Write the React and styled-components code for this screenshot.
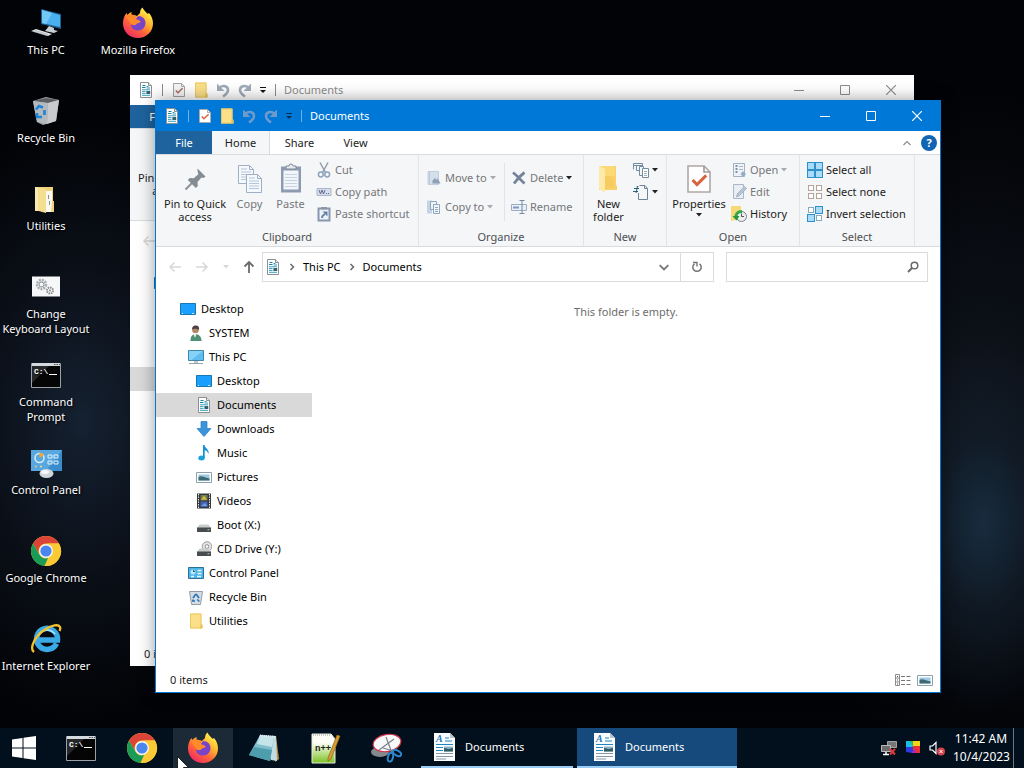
import React from 'react';
import styled, { createGlobalStyle, css, ThemeProvider } from 'styled-components';

const theme = {
  accent: '#0078d7',
  fileTab: '#1e639d',
  ribbon: '#f5f6f7',
  line: '#dadbdc',
  text: '#1c1c1c',
  muted: '#74777b',
  selected: '#d9d9d9',
};

const GlobalStyle = createGlobalStyle`
  * {
    box-sizing: border-box;
  }

  body {
    margin: 0;
    overflow: hidden;
    background-color: #020306;
    font-family: 'Noto Sans', 'Open Sans', sans-serif;
    font-size: 11px;
    line-height: 16px;
  }

  button,
  input {
    font: inherit;
    color: inherit;
    background: none;
    border: 0;
    padding: 0;
    margin: 0;
  }

  a {
    color: inherit;
    text-decoration: none;
  }

  ul {
    list-style: none;
    margin: 0;
    padding: 0;
  }

  svg {
    display: block;
    flex: none;
  }
`;

/* ---------- icons ---------- */

const Svg = ({ size = 16, width, height, box = 16, children }) => (
  <svg
    width={width || size}
    height={height || size}
    viewBox={`0 0 ${box} ${box}`}
    fill="none"
    aria-hidden="true"
  >
    {children}
  </svg>
);

const DocumentIcon = ({ size = 16 }) => (
  <Svg size={size}>
    <path d="M2.500.500h8l3 3v12h-11z" fill="#fff" stroke="#8a8f94" />
    <path d="M10.500.500v3h3" stroke="#8a8f94" fill="#e8e8e8" />
    <path d="M4.500 3.500h3M4 5.500h3.500" stroke="#1c7fa6" strokeWidth="1.200" />
    <path d="M8.500 4.500h2M8.500 6h3.500M4 7.800h8M4 9.600h3.500M4 11.400h3.500M4 13.300h8" stroke="#2391b5" strokeWidth=".9" />
    <path d="M8.400 9h3.800v3H8.400z" fill="#35606f" />
  </Svg>
);

const LargeDocumentIcon = () => (
  <Svg size={30} box={30}>
    <path d="M5 1h16l5 5v23H5z" fill="#fcfdfe" />
    <path d="M21 1v5h5" fill="#b7c5d1" />
    <text x="7" y="10" fill="#1b78b6" fontFamily="Liberation Serif, serif" fontSize="10" fontStyle="italic" fontWeight="700">
      A
    </text>
    <path d="M16 6h4M16 9h7M7 12.500h17M7 15.500h7M7 18.500h7" stroke="#1d86c0" />
    <path d="M7 21.500h17M7 24.500h17M7 27h10" stroke="#8999aa" />
    <path d="M15 14.500h9v5h-9z" fill="#8bb5cc" />
    <path d="m15 16 5 1 4-1v3.500h-9z" fill="#335b62" />
  </Svg>
);

const CheckSheetIcon = ({ size = 16, faded }) => (
  <Svg size={size}>
    <path d="M2.500 1.500h8l3 3v10h-11z" fill={faded ? '#f4f4f4' : '#fff'} stroke={faded ? '#928a88' : '#b0a7a4'} strokeWidth=".8" />
    <path d="M10.500 1.500v3h3" stroke="#a09a98" strokeWidth=".8" />
    <path d="m4.800 8.500 2.200 2.300 4.600-4.600" stroke={faded ? '#a66b62' : '#d9633f'} strokeWidth="1.500" />
  </Svg>
);

const FolderIcon = ({ size = 16 }) => (
  <Svg size={size}>
    <path d="M2 .5h11.500v11l1 1v3H2z" fill="#fbe089" />
    <path d="M2.500 1h10.500v14h-10.500z" stroke="#edc85f" />
    <path d="M12.500 11.500h2v4h-2z" fill="#e9c04f" />
  </Svg>
);

const UndoIcon = ({ color, flip }) => (
  <Svg>
    <g transform={flip ? 'translate(16 0) scale(-1 1)' : undefined}>
      <path d="M4.500 5.500c4-3 8.500-1 8.500 2.500 0 2.500-2 4.500-5 6.500" stroke={color} strokeWidth="2.600" />
      <path d="M2 1.500v7.500h7.500z" fill={color} />
    </g>
  </Svg>
);

const CustomizeIcon = ({ color }) => (
  <Svg size={8} box={8}>
    <path d="M1 1.500h6" stroke={color} />
    <path d="M1 4h6L4 7z" fill={color} />
  </Svg>
);

const Caret = ({ color = '#222' }) => (
  <Svg size={6} box={6}>
    <path d="M0 1h6L3 4.500z" fill={color} />
  </Svg>
);

const Chevron = ({ direction = 'right', size = 8, color = '#6a6a6a', weight = 1.5 }) => {
  const paths = {
    right: 'M2.500 1l3 3-3 3',
    down: 'M.5 2.500l3.500 3.500 3.500-3.500',
    up: 'M.5 6l3.500-3.500L7.500 6',
  };
  return (
    <Svg size={size} box={8}>
      <path d={paths[direction]} stroke={color} strokeWidth={weight} />
    </Svg>
  );
};

const Arrow = ({ rotate = 0, color, weight = 1.5 }) => (
  <Svg size={14} box={14}>
    <g transform={`rotate(${rotate} 7 7)`}>
      <path d="M13 7H2M6.500 2.500 2 7l4.500 4.500" stroke={color} strokeWidth={weight} />
    </g>
  </Svg>
);

const PinIcon = () => (
  <Svg size={32} box={32}>
    <path d="M6.500 26.500 15 18" stroke="#8b9299" strokeWidth="2" />
    <path d="m18.500 5.500 8 8-2 1.500-2-.5-4 4.500.3 4-2 2-8-8 2-2 4 .3 4.500-4-.8-3.500z" fill="#848c94" />
  </Svg>
);

const CopyIcon = () => (
  <Svg size={32} box={32}>
    {[[4, 2], [12, 11]].map(([x, y]) => (
      <g key={x} transform={`translate(${x} ${y})`}>
        <path d="M.5.500h11l4 4v14H.5z" fill="#f5f8fc" stroke="#9fb0c4" />
        <path d="M11.500.500v4h4" stroke="#9fb0c4" />
        <path d="M3 4h6M3 7h10M3 9.500h10M3 12h10M3 14.500h10" stroke="#b4c6d9" />
      </g>
    ))}
  </Svg>
);

const PasteIcon = () => (
  <Svg size={32} box={32}>
    <path d="M6 3.500h20v26H6z" fill="#8d9bb0" />
    <path d="M8.500 7.500h15v19h-15z" fill="#f2f6fb" />
    <path d="M11 6V3h3a2 2 0 0 1 4 0h3v3z" fill="#e7ebf0" stroke="#7e8898" />
    <path d="M10 11.500h12M10 14.500h12M10 17.500h12M10 20.500h12M10 23.500h12" stroke="#c7d3e0" />
  </Svg>
);

const CutIcon = () => (
  <Svg>
    <path d="m4 .5 5.500 10M12 .5 6.500 10.500" stroke="#8e99a7" strokeWidth="1.400" />
    <circle cx="4.800" cy="12.500" r="2.400" stroke="#8fa2bb" strokeWidth="1.500" />
    <circle cx="11.200" cy="12.500" r="2.400" stroke="#8fa2bb" strokeWidth="1.500" />
  </Svg>
);

const CopyPathIcon = () => (
  <Svg>
    <path d="M1 4.500h14v7H1z" fill="#d7ddec" stroke="#aab6cd" />
    <path d="m3 6 1.500 4L6 6l1.500 4L9 6M10 9.500h1M12 9.500h1" stroke="#5e6c91" />
  </Svg>
);

const PasteShortcutIcon = () => (
  <Svg>
    <path d="M2.500 2.500h11v12h-11z" stroke="#8797ae" strokeWidth="2" fill="#eef2f8" />
    <path d="M5 3.500V1h6v2.500z" fill="#8c97a8" />
    <path d="M6 12c0-2 1-3 3-4" stroke="#6280a7" strokeWidth="1.800" />
    <path d="M6.500 5.500h5V10.500z" fill="#6280a7" />
  </Svg>
);

const MoveToIcon = () => (
  <Svg>
    <path d="M2 1.500h10.500v13H2z" fill="#d3dfeb" stroke="#c0cedd" />
    <path d="M3.500 2v12" stroke="#b6c7da" />
    <path d="m6.500 10.500 3-3v2h2V8l3 5.500h-8z" fill="#8f9fb5" />
  </Svg>
);

const CopyToIcon = () => (
  <Svg>
    <path d="M1 1.500h5v13H1z" fill="#c4d4e4" />
    <path d="M4.500 2.500h6v8h-6z" fill="#edf2f7" stroke="#91a6bf" />
    <path d="M7.500 5.500h6v9h-6z" fill="#f3f6f9" stroke="#91a6bf" />
    <path d="M9 8.500h3M9 10.500h3M9 12.500h3" stroke="#91a6bf" />
  </Svg>
);

const DeleteIcon = () => (
  <Svg>
    <path d="M2 2.500c4 3 7 7 11.500 11M13.500 2.500C10 5 7 8 3 13.500" stroke="#75839a" strokeWidth="2.800" />
  </Svg>
);

const RenameIcon = () => (
  <Svg>
    <path d="M.5 5.500h15v6H.5z" fill="#eaf0f7" stroke="#9caec4" />
    <path d="M2 7.500h6v2H2z" fill="#7f9bc2" />
    <path d="M8.500 1.500h5M11 1.500v13M8.500 14.500h5" stroke="#7789a1" />
  </Svg>
);

const NewFolderIcon = () => (
  <Svg size={32} box={32}>
    <path d="M6 3h17v19l1 1v4H6z" fill="#f9d06a" />
    <path d="M6 3h16v10H6z" fill="#fbd974" />
    <path d="m6 3 6 3v24l-6-4z" fill="#fdeaa8" />
    <path d="M12 13h5l4 4v7l-9 2z" fill="#f7cb5f" />
  </Svg>
);

const NewItemIcon = () => (
  <Svg>
    <path d="M.5 7.500v-6h9v3M.5 3.500h9M3.500 3.500v5h3" stroke="#748ca0" />
    <path d="M6.500 4.500h4v9h-4z" fill="#f2f6f8" stroke="#748ca0" />
    <path d="M9.500 6.500h6v9h-6z" fill="#fff" stroke="#748ca0" />
    <path d="M11 9.500h3M11 11.500h3M11 13.500h3" stroke="#9bb1c1" />
  </Svg>
);

const EasyAccessIcon = () => (
  <Svg>
    <path d="M5.500 2.500h-2M5.500 9v6.500h9v-11l-2.500-3H6.500" stroke="#6f8597" />
    <path d="M11.500 1.500v3h3" stroke="#6f8597" />
    <path d="M1 4.500h5M0 7.500h5M4.500 2.500 3 9" stroke="#24627d" />
  </Svg>
);

const OpenIcon = () => (
  <Svg>
    <path d="M2.500 1.500h11v13h-11z" fill="#eff3f7" stroke="#a3b1c0" />
    <path d="M4.500 4h2M4.500 7h2M4.500 10h2" stroke="#7f93ab" strokeWidth="2" />
    <path d="M8 4.500h4M8 7.500h4" stroke="#a8b8ca" />
    <path d="m12 9 3 3-3 3-2.500-3z" fill="#98acc4" />
  </Svg>
);

const EditIcon = () => (
  <Svg>
    <path d="M2.500.500h10v14h-10z" fill="#e9eef5" stroke="#a9b7c9" />
    <path d="m5.500 13 1-3.500 7-7 2 2-7 7z" fill="#b9c5d4" stroke="#9baabd" strokeWidth=".8" />
  </Svg>
);

const HistoryIcon = () => (
  <Svg>
    <path d="M0 0h10v13l-10 2z" fill="#f7d978" />
    <circle cx="10.500" cy="10.500" r="5" fill="#eef0ef" stroke="#7b8085" />
    <path d="M10.500 7.500v3H13" stroke="#555" />
    <path d="M5 12c-.5-4 1.500-6.500 6-6.500" stroke="#35a947" strokeWidth="3" />
    <path d="M1.500 10h7L5.500 14.500z" fill="#1f9a3d" />
  </Svg>
);

const tiles = {
  all: [1, 1, 1, 1],
  none: [0, 0, 0, 0],
  invert: [0, 1, 1, 0],
};

const SelectIcon = ({ kind }) => (
  <Svg>
    {tiles[kind].map((on, i) => {
      const x = (i % 2) * 8;
      const y = Math.floor(i / 2) * 8;
      return on ? (
        <rect key={i} x={x + 0.5} y={y + 0.5} width="7" height="7" fill="#a9dcfb" stroke="#2f8fcb" />
      ) : (
        <rect key={i} x={x + 1.5} y={y + 1.5} width="5" height="5" fill="#fff" stroke={kind === 'none' ? '#b5a39b' : '#8aa9bf'} />
      );
    })}
  </Svg>
);

const RefreshIcon = () => (
  <Svg size={12} box={12}>
    <path d="M3.500 2.800A4.200 4.200 0 1 0 8.500 2.800" stroke="#757575" strokeWidth="1.500" />
    <path d="M2 1.500h4v4" stroke="#757575" strokeWidth="1.400" />
  </Svg>
);

const SearchIcon = () => (
  <Svg size={12} box={12}>
    <circle cx="7.500" cy="4.500" r="3.300" stroke="#6b6b6b" strokeWidth="1.500" />
    <path d="M5.200 6.800 1 11" stroke="#6b6b6b" strokeWidth="2" />
  </Svg>
);

const DesktopIcon = () => (
  <Svg>
    <path d="M.5 2.500h15v11H.5z" fill="#1a9fff" stroke="#1576b8" />
    <path d="M2 12.500h1M12 12.500h2" stroke="#d5efff" />
  </Svg>
);

const UserIcon = () => (
  <Svg>
    <path d="M2.500 16c0-4 1-6.500 5-7 4 .5 6 3 6 7z" fill="#4f8f73" />
    <path d="m5.500 9 1.500 4 1.500-4z" fill="#eef2ef" />
    <circle cx="7.500" cy="5" r="3.300" fill="#b48468" />
    <path d="M4 4.500C4 1.500 6 0 8 .5c2.500 0 3.500 2 3 4.500C9.500 3.500 6 3.500 4 4.500z" fill="#4c4340" />
  </Svg>
);

const MonitorIcon = () => (
  <Svg>
    <path d="M.5 1.500h15v10H.5z" fill="#5ebcf0" stroke="#3f86a8" />
    <path d="M1 2h14L3 11H1z" fill="#86d2f7" />
    <path d="M6 12h4v2H6z" fill="#c0c8cc" />
    <path d="M1 14.500h14" stroke="#9aa4aa" />
  </Svg>
);

const DownloadIcon = () => (
  <Svg>
    <path d="M5 .5h6v7h4l-7 8-7-8h4z" fill="#3a93dd" stroke="#2a78bd" strokeWidth=".7" />
  </Svg>
);

const MusicIcon = () => (
  <Svg>
    <ellipse cx="5.500" cy="13" rx="3.200" ry="2.500" fill="#1aa0dd" />
    <path d="M7 13V0h1.500c.5 3.500 5 4 4 9-1-3-2.500-3.500-3.800-3.700V13z" fill="#1590d0" />
  </Svg>
);

const PictureIcon = () => (
  <Svg>
    <path d="M.5 3.500h15v10H.5z" fill="#fff" stroke="#8da0ad" />
    <path d="M2.500 5.500h11v6h-11z" fill="#9fc9e2" />
    <path d="M2.500 8c3-2 5 .5 11 1.500v2h-11z" fill="#3d6a75" />
  </Svg>
);

const VideoIcon = () => (
  <Svg>
    <path d="M1 .5h14v15H1z" fill="#34383d" />
    <path d="M2.500 1v14M13.500 1v14" stroke="#e4e4e4" strokeDasharray="1.500 1" />
    <path d="M4.500 2h7v5.500h-7z" fill="#6c8149" />
    <path d="m5 7 3-4.500 3 4z" fill="#d5b63f" />
    <path d="M4.500 8.500h7V14h-7z" fill="#4660b4" />
    <path d="m5 13 4-3 2.500 3z" fill="#6f9dd6" />
  </Svg>
);

const DriveIcon = ({ disc }) => (
  <Svg>
    {disc && (
      <g>
        <circle cx="11" cy="5.500" r="4.800" fill="#e2e2e2" stroke="#9f9f9f" />
        <circle cx="11" cy="5.500" r="1.800" fill="#fff" stroke="#8d8d8d" />
      </g>
    )}
    <path d="M3.500 7.500h9L15 11H1z" fill="#c9cccd" />
    <path d="M1 10.500h14v4.500H1z" fill="#474c4f" />
    <path d="M11.500 12.800h2" stroke="#a7d5a2" />
  </Svg>
);

const ControlPanelIcon = ({ large }) =>
  large ? (
    <Svg size={32} box={32}>
      <path d="M1 3h31v21H1z" fill="#3a8dcc" />
      <path d="M1 3h31L16 24H1z" fill="#58a8df" />
      <circle cx="9.500" cy="11" r="4.500" stroke="#d9effc" strokeWidth="1.500" />
      <path d="M9.500 11V5.500a5.500 5.500 0 0 1 4.500 2.500z" fill="#f2a338" />
      <path d="M18 8h4v3h-4zM24 8h4v3h-4zM18 14h4v3h-4zM24 14h4v3h-4z" stroke="#dff2fd" />
      <path d="M5 19.500h1.500M10 19.500h2" stroke="#f7d58a" strokeWidth="1.500" />
      <ellipse cx="16.500" cy="26.500" rx="7" ry="4.500" fill="#cfd6da" />
      <ellipse cx="15" cy="25" rx="4" ry="2" fill="#f4f6f7" />
    </Svg>
  ) : (
    <Svg>
      <path d="M.5 2.500h15v11H.5z" fill="#4db5ea" stroke="#2c6f98" />
      <circle cx="5" cy="7" r="2.500" fill="#bfe7fb" />
      <path d="M5 7V4.500L7.500 7z" fill="#276b3f" />
      <path d="M9.500 5.500h4M9.500 8.500h4M3 11.500h3M9 11.500h4" stroke="#e7f7ff" strokeWidth="1.500" />
    </Svg>
  );

const BinIcon = ({ large }) =>
  large ? (
    <Svg size={32} box={32}>
      <path d="m3 6 13-4 13 3-3 21-13 4-6-3z" fill="#a5a9ac" />
      <path d="m3 6 13-3 13 2-11 3z" fill="#5c6063" />
      <path d="m18 8 11-3-3 21-9 3z" fill="#c8cacc" />
      <path d="m3 6 15 2-1 21-10-2z" fill="#b4b9bd" />
      <path d="M6 14.500 9 11l4 1.500M14.500 15v5M12 22H7v-4" stroke="#1b83d8" strokeWidth="2.600" />
    </Svg>
  ) : (
    <Svg>
      <path d="M1.500 2.500h13l-2 13h-9z" fill="#d6dce3" stroke="#949da6" />
      <path d="m5 9 2.500-3.500h1L11 9M10.500 11H9M7 12H4.800L5 10.500M11.500 12H10" stroke="#2675bb" strokeWidth="1.600" />
    </Svg>
  );

const ThisPcIcon = () => (
  <Svg size={32} box={32}>
    <path d="m11 2 20 5v15l-20-5z" fill="#1c5f93" />
    <path d="m12 3 18 5v12l-18-4z" fill="#4bb1ee" />
    <path d="m12 3 10 3-6 11-4-1z" fill="#74c8f6" />
    <path d="m19 19 5 2v2l4 1-4 2-9-2z" fill="#c8cfd4" />
    <path d="m1 24 5-2 16 5-4 2z" fill="#dfe3e6" />
    <path d="m5 23.500 13 4M3.500 24.500l13 4" stroke="#9ea6ab" strokeWidth=".6" />
  </Svg>
);

const UtilitiesIcon = () => (
  <Svg size={32} box={32}>
    <path d="M5 4h18v24H5z" fill="#edd27b" />
    <path d="M14 8h8v21h-8z" fill="#f8f8f3" />
    <path d="M18.500 12v4M19.500 18v4" stroke="#8d8d80" />
    <path d="m5 4 11 2v24L5 27z" fill="#f5de90" />
    <path d="m5 4 3 1v23l-3-1z" fill="#f9eab3" />
    <path d="M22 18h2v11h-3z" fill="#f0d27a" />
  </Svg>
);

const GearsIcon = () => (
  <Svg size={32} box={32}>
    <path d="M2 5.500h28v20H2z" fill="#f5f7f8" />
    <circle cx="11.500" cy="13.500" r="4.500" stroke="#a9acae" strokeWidth="2.500" strokeDasharray="2 1" />
    <circle cx="11.500" cy="13.500" r="2.500" stroke="#85898b" />
    <circle cx="20" cy="19.500" r="3" stroke="#8a8e90" strokeWidth="2" strokeDasharray="1.500 .8" />
    <circle cx="20" cy="19.500" r="1" fill="#85898b" />
  </Svg>
);

const PromptIcon = () => (
  <Svg size={32} box={32}>
    <path d="M1.500 4.500h29v24h-29z" fill="#050505" stroke="#9aa0a5" />
    <path d="M2 4h28v3H2z" fill="#d5dade" />
    <path d="M24 5.500h1.500M26.500 5.500h1.500M29 5.500h1" stroke="#555" />
    <path d="M2 7h17L2 24z" fill="#26282a" />
    <text x="4" y="15" fill="#fff" fontFamily="Liberation Mono, monospace" fontSize="8" fontWeight="700">
      C:\
    </text>
    <path d="M19 15.500h8" stroke="#fff" />
  </Svg>
);

const ChromeIcon = () => (
  <Svg size={32} box={32}>
    <circle cx="16" cy="16" r="15" fill="#fbc934" />
    <path d="M3 8.500A15 15 0 0 1 29 8.500H16a7.500 7.500 0 0 0-6.500 11.200z" fill="#db4437" />
    <path d="M3 8.500 9.500 19.700A7.500 7.500 0 0 0 18 23l-3.500 8A15 15 0 0 1 3 8.500z" fill="#1a9c56" />
    <path d="M16 8.500h13A15 15 0 0 1 14.500 31l8-11.200A7.500 7.500 0 0 0 16 8.500z" fill="#fbc934" />
    <circle cx="16" cy="16" r="7" fill="#f4f6f8" />
    <circle cx="16" cy="16" r="5.600" fill="#4a86ee" />
  </Svg>
);

const FirefoxIcon = ({ id }) => (
  <Svg size={32} box={32}>
    <defs>
      <linearGradient id={id} x1="26" y1="4" x2="8" y2="29" gradientUnits="userSpaceOnUse">
        <stop offset="0" stopColor="#fff04a" />
        <stop offset=".35" stopColor="#ffb02e" />
        <stop offset=".65" stopColor="#ff6438" />
        <stop offset="1" stopColor="#f22f62" />
      </linearGradient>
    </defs>
    <path
      d="M20.500.500c1 2.500 3 4 5 6.200 1 .2 1.500-.7 1.500-.7 2.500 3 4 6.500 4 10.300C31 25 24.300 31 16 31S1 25 1 16.500c0-4 1-7.500 3.500-10.500L5.500 8c1-1.500 2.500-2.500 4-3L9.500 8c2 0 4 .2 5.500 1l3-3c0-2.500 1-4.500 2.500-5.500z"
      fill={`url(#${id})`}
    />
    <path d="M16.500 9c4 0 7 3 7 7s-3 7.500-7.500 7.500S9 21 9 17c2 1.500 4.500 1 6-.5 1.500-1 3-.8 3.500-1.500-.5-1.500-3-1.500-4.500-3 .5-1.500 1.500-2.500 2.500-3z" fill="#7a44c9" />
    <path d="M4.500 9.500c4-3.500 9-1.500 10.500.5-1 0-1.500 2-1 2.500 1.500.5 3.500.5 4 1.500 0 1-2.500 1.500-3.500 3s-4 1.500-5.500 0c-.5-2-2.500-3-4.500-7.500z" fill="#ff8a2b" />
  </Svg>
);

const ExplorerIcon = () => (
  <Svg size={32} box={32}>
    <path d="M26.500 20.500A10.500 10.500 0 1 1 27.500 17H8" stroke="#3aa9e6" strokeWidth="5.500" />
    <path d="M8 13a10 10 0 0 1 17-2" stroke="#9fe2fb" strokeWidth="1.800" />
    <path d="M4 29C-1 25 5 13 15 6.500 22 2 28.500 1 30 4c.5 1.200.3 2.500-.5 4" stroke="#f3c12f" strokeWidth="2.300" />
  </Svg>
);

const NotepadIcon = () => (
  <Svg size={32} box={32}>
    <path d="m28 4 3 23-4 3z" fill="#b78f4c" />
    <path d="m12 3 16 1 1 25-6-1z" fill="#c2dde2" />
    <path d="m12 3 14 2-4 24L1 23z" fill="#7fbfcc" />
    <path d="m12 3 14 2-2 10-15-3z" fill="#c4e4ea" />
    <path d="m6 15 18 3-2 11L1 23z" fill="#4e9dac" />
    <path d="m12 3.500 16 1.500" stroke="#e9eef0" strokeWidth="2" strokeDasharray="1 1" />
  </Svg>
);

const NotepadPlusIcon = ({ id }) => (
  <Svg size={32} box={32}>
    <defs>
      <linearGradient id={id} x1="0" y1="0" x2="0" y2="1">
        <stop offset=".3" stopColor="#fdfef6" />
        <stop offset="1" stopColor="#7cc224" />
      </linearGradient>
    </defs>
    <path d="M3 2h19l4 5v24H3z" fill={`url(#${id})`} stroke="#e9ecdf" />
    <path d="M4 3h17" stroke="#999" strokeDasharray="1 1" />
    <text x="6" y="19" fill="#1c2418" fontFamily="Liberation Sans, sans-serif" fontSize="9" fontWeight="700">
      n++
    </text>
    <path d="m19 26 9-23 3 1-9 23-3 2z" fill="#d99c2d" stroke="#8a6526" strokeWidth=".7" />
  </Svg>
);

const SnippingIcon = () => (
  <Svg size={32} box={32}>
    <ellipse cx="10" cy="20" rx="9" ry="5" fill="#85898e" />
    <ellipse cx="17" cy="11" rx="14" ry="8.500" transform="rotate(-10 17 11)" fill="#f8f8f8" stroke="#d3344d" strokeWidth="1.200" />
    <path d="m16 5 6 16M24 7 9 18M13 16l10 3" stroke="#79828a" strokeWidth="1.200" />
    <ellipse cx="20.500" cy="25" rx="2.500" ry="4.500" transform="rotate(15 20 25)" stroke="#2b86cc" strokeWidth="2" />
    <ellipse cx="27" cy="21" rx="2.500" ry="4.500" transform="rotate(-60 27 21)" stroke="#2b86cc" strokeWidth="2" />
  </Svg>
);

const WindowsIcon = () => (
  <Svg size={24} box={24}>
    <path d="M0 3.500 10.500 2v9.500H0zM11.500 1.800 24 0v11.500H11.500zM0 12.500h10.500V22L0 20.500zM11.500 12.500H24V24l-12.500-1.800z" fill="#fff" />
  </Svg>
);

const NetworkIcon = () => (
  <Svg>
    <path d="M6.500 1.500h9v6h-9z" fill="#777" stroke="#a2a2a2" />
    <path d="M.5 5.500h9v6h-9z" fill="#6c6c6c" stroke="#bababa" />
    <path d="M5 12v2M2 14.500h6" stroke="#fff" strokeWidth="1.500" />
    <path d="m9 9 5 5.500M14 9l-5 5.500" stroke="#e23a3a" strokeWidth="2" />
  </Svg>
);

const DisplayIcon = () => (
  <Svg>
    <path d="M1 1h7v7H1z" fill="#27c04d" />
    <path d="M8 1h7v5H8z" fill="#f4d21c" />
    <path d="M1 1h4l3 5-4 3-3-2z" fill="#18bfe0" />
    <path d="M8 6h7v7H8z" fill="#ea2d36" />
    <path d="M1 7h7v6l-7-1z" fill="#3039e0" />
    <path d="m6 13 4-4 1 4H6z" fill="#a826c4" />
  </Svg>
);

const VolumeIcon = () => (
  <Svg>
    <path d="M1 6h2.500L7 2.500v11L3.500 10H1z" stroke="#fff" strokeWidth="1.200" />
    <circle cx="12" cy="11.500" r="4" fill="#d64550" />
    <path d="m10.500 10 3 3M13.500 10l-3 3" stroke="#fff" />
  </Svg>
);

const DetailsViewIcon = () => (
  <Svg>
    <path d="M.5 2.500h4v11h-4zM.5 6h4M.5 10h4" stroke="#8b8b8b" />
    <path d="M2 4.500h1M2 8h1M2 12h1" stroke="#555" />
    <path d="M6 4.500h4M11.500 4.500h4M6 8.500h4M11.500 8.500h4M6 12.500h4M11.500 12.500h4" stroke="#777" />
  </Svg>
);

/* ---------- desktop ---------- */

const Screen = styled.div`
  display: flex;
  flex-direction: column;
  height: 100vh;
  background: radial-gradient(ellipse 110px 190px at 96% 68%, #182c3e 0%, rgba(17, 28, 40, 0.8) 45%, transparent 100%),
    radial-gradient(ellipse 190px 300px at 8% 55%, #152131 0%, rgba(13, 19, 29, 0.8) 50%, transparent 100%),
    radial-gradient(ellipse 260px 330px at 96% 55%, #10151e 0%, transparent 100%), #020306;
`;

const Desktop = styled.main`
  position: relative;
  flex: 1;
  min-height: 0;
`;

const ShortcutGrid = styled.ul`
  display: grid;
  grid-auto-flow: column;
  grid-template-rows: repeat(8, 88px);
  grid-auto-columns: 92px;
  justify-content: start;
`;

const Shortcut = styled.a`
  display: flex;
  flex-direction: column;
  align-items: center;
  gap: 3px;
  padding-top: 7px;
  color: #fff;
  line-height: 15px;
  text-align: center;
  white-space: pre-line;
  text-shadow: 1px 1px 2px #000;
`;

/* ---------- window ---------- */

const WindowFrame = styled.section`
  position: absolute;
  top: ${({ $inset }) => $inset[0]}px;
  right: ${({ $inset }) => $inset[1]}px;
  bottom: ${({ $inset }) => $inset[2]}px;
  left: ${({ $inset }) => $inset[3]}px;
  display: flex;
  flex-direction: column;
  overflow: hidden;
  color: ${({ theme }) => theme.text};
  background-color: #fff;

  ${({ $active, theme }) =>
    $active &&
    css`
      border: 1px solid ${theme.accent};
      box-shadow: 0 0 16px rgba(0, 0, 0, 0.4);
    `}
`;

const TitleBar = styled.header`
  display: flex;
  align-items: center;
  flex: none;
  height: 30px;
  padding-left: 8px;
  color: ${({ $active }) => ($active ? '#fff' : '#8c8c8c')};
  background-color: ${({ $active, theme }) => ($active ? theme.accent : '#fff')};
`;

const QuickAccess = styled.div`
  display: flex;
  align-items: center;
  gap: 6px;
`;

const TitleDivider = styled.span`
  width: 1px;
  height: 12px;
  margin: 0 8px;
  background-color: ${({ $active }) => ($active ? '#6eb2ea' : '#8c8c8c')};
`;

const Title = styled.h1`
  flex: 1;
  margin: 0;
  font-size: 11px;
  font-weight: 400;
`;

const CaptionButton = styled.button`
  display: grid;
  place-items: center;
  width: 46px;
  height: 30px;
`;

const TabBar = styled.nav`
  display: flex;
  align-items: center;
  flex: none;
  height: 23px;
  padding-right: 3px;
`;

const Tab = styled.button`
  width: ${({ $width }) => $width}px;
  height: 24px;
  color: ${({ $file }) => ($file ? '#fff' : 'inherit')};
  background-color: ${({ $file, $current, theme }) => {
    if ($file) return theme.fileTab;
    return $current ? theme.ribbon : 'transparent';
  }};
  border-right: ${({ $current, theme }) => ($current ? `1px solid ${theme.line}` : 0)};
`;

const TabTools = styled.div`
  display: flex;
  align-items: center;
  gap: 10px;
  margin-left: auto;
`;

const HelpButton = styled.button`
  width: 16px;
  height: 16px;
  border-radius: 8px;
  color: #fff;
  background-color: #1166b4;
  font-weight: 700;
`;

const Ribbon = styled.div`
  display: flex;
  flex: none;
  height: 93px;
  background-color: ${({ theme }) => theme.ribbon};
  border: solid ${({ theme }) => theme.line};
  border-width: 1px 0;
`;

const Group = styled.section`
  display: flex;
  flex-direction: column;
  width: ${({ $width }) => $width}px;
  border-right: 1px solid #e4e5e6;
`;

const GroupBody = styled.div`
  display: flex;
  align-items: flex-start;
  flex: 1;
  padding-left: ${({ $indent }) => $indent || 0}px;
`;

const GroupLabel = styled.h2`
  margin: 0;
  height: 17px;
  font-size: 11px;
  font-weight: 400;
  text-align: center;
  color: #4c4f52;
`;

const BigButton = styled.button`
  display: flex;
  flex-direction: column;
  align-items: center;
  gap: 2px;
  width: ${({ $width }) => $width}px;
  padding-top: 8px;
  line-height: 13px;
  white-space: pre-line;
  color: ${({ $muted, theme }) => ($muted ? theme.muted : theme.text)};
`;

const Stack = styled.div`
  display: flex;
  flex-direction: column;
  padding-top: ${({ $loose }) => ($loose ? 8 : 4)}px;
  width: ${({ $width }) => ($width ? `${$width}px` : 'auto')};
`;

const SmallButton = styled.button`
  display: flex;
  align-items: center;
  gap: 3px;
  height: ${({ $loose }) => ($loose ? 29 : 22)}px;
  white-space: nowrap;
  color: ${({ $muted, theme }) => ($muted ? theme.muted : theme.text)};
`;

const StackDivider = styled.span`
  width: 1px;
  height: 58px;
  margin: 8px 6px 0 0;
  background-color: #e1e3e5;
`;

const AddressRow = styled.div`
  display: flex;
  align-items: center;
  flex: none;
  height: 40px;
  padding: 0 12px;
`;

const Navigation = styled.div`
  display: flex;
  align-items: center;
  justify-content: space-between;
  width: 88px;
  margin-right: 6px;
`;

const AddressBox = styled.div`
  display: flex;
  align-items: center;
  flex: 1;
  height: 30px;
  padding-left: 2px;
  border: 1px solid ${({ theme }) => theme.line};
`;

const Crumbs = styled.div`
  display: flex;
  align-items: center;
  gap: 7px;
  flex: 1;
  color: #000;
`;

const AddressButton = styled.button`
  display: grid;
  place-items: center;
  width: ${({ $divided }) => ($divided ? 33 : 32)}px;
  height: 28px;
  border-left: ${({ $divided, theme }) => ($divided ? `1px solid ${theme.line}` : 0)};
`;

const SearchBox = styled.label`
  display: flex;
  align-items: center;
  width: 202px;
  height: 30px;
  margin-left: 12px;
  padding: 0 8px;
  border: 1px solid ${({ theme }) => theme.line};
`;

const SearchInput = styled.input`
  flex: 1;
  min-width: 0;
  outline: 0;
`;

const Body = styled.div`
  display: flex;
  flex: 1;
  min-height: 0;
`;

const Tree = styled.ul`
  width: 156px;
  padding-top: 10px;
  color: #000;
`;

const TreeItem = styled.a`
  display: flex;
  align-items: center;
  gap: 5px;
  height: 24px;
  padding-left: ${({ $level }) => 24 + $level * 8}px;
  background-color: ${({ $selected, theme }) => ($selected ? theme.selected : 'transparent')};
`;

const Content = styled.div`
  flex: 1;
  padding-top: 17px;
  text-align: center;
  color: #6d6d6d;
`;

const StatusBar = styled.footer`
  display: flex;
  align-items: center;
  justify-content: space-between;
  flex: none;
  height: 24px;
  padding: 0 7px 0 14px;
`;

const ViewSwitch = styled.div`
  display: flex;
  gap: 6px;
`;

/* ---------- taskbar ---------- */

const TaskBar = styled.footer`
  display: flex;
  flex: none;
  height: 40px;
  color: #fff;
  background-color: #020f1c;
`;

const StartButton = styled.button`
  display: grid;
  place-items: center;
  width: 48px;
`;

const Pinned = styled.div`
  display: flex;
  gap: 1px;
  margin: 0 5px 0 3px;
`;

const PinnedButton = styled.button`
  position: relative;
  display: grid;
  place-items: center;
  width: 60px;
  background-color: ${({ $hover }) => ($hover ? '#1c2936' : 'transparent')};
`;

const Cursor = styled.svg`
  position: absolute;
  top: 28px;
  left: 4px;
`;

const TaskButton = styled.button`
  display: flex;
  align-items: center;
  gap: 6px;
  width: ${({ $active }) => ($active ? 160 : 152)}px;
  margin-right: 4px;
  padding: 0 0 0 ${({ $active }) => ($active ? 12 : 8)}px;
  border-bottom: 2px solid #99ccf5;
  background-color: ${({ $active }) => ($active ? '#174a7c' : 'transparent')};
`;

const Tray = styled.div`
  display: flex;
  align-items: center;
  gap: 8px;
  margin-left: auto;
`;

const Clock = styled.time`
  width: 56px;
  font-size: 12px;
  line-height: 18px;
  text-align: center;
`;

const ShowDesktop = styled.button`
  align-self: stretch;
  width: 11px;
  margin-left: -4px;
  border-left: 1px solid #6d7780;
`;

const shortcuts = [
  { label: 'This PC', icon: <ThisPcIcon /> },
  { label: 'Recycle Bin', icon: <BinIcon large /> },
  { label: 'Utilities', icon: <UtilitiesIcon /> },
  { label: 'Change\nKeyboard Layout', icon: <GearsIcon /> },
  { label: 'Command\nPrompt', icon: <PromptIcon /> },
  { label: 'Control Panel', icon: <ControlPanelIcon large /> },
  { label: 'Google Chrome', icon: <ChromeIcon /> },
  { label: 'Internet Explorer', icon: <ExplorerIcon /> },
  { label: 'Mozilla Firefox', icon: <FirefoxIcon id="fox-desktop" /> },
];

const tree = [
  { label: 'Desktop', level: 0, icon: <DesktopIcon /> },
  { label: 'SYSTEM', level: 1, icon: <UserIcon /> },
  { label: 'This PC', level: 1, icon: <MonitorIcon /> },
  { label: 'Desktop', level: 2, icon: <DesktopIcon /> },
  { label: 'Documents', level: 2, icon: <DocumentIcon />, selected: true },
  { label: 'Downloads', level: 2, icon: <DownloadIcon /> },
  { label: 'Music', level: 2, icon: <MusicIcon /> },
  { label: 'Pictures', level: 2, icon: <PictureIcon /> },
  { label: 'Videos', level: 2, icon: <VideoIcon /> },
  { label: 'Boot (X:)', level: 2, icon: <DriveIcon /> },
  { label: 'CD Drive (Y:)', level: 2, icon: <DriveIcon disc /> },
  { label: 'Control Panel', level: 1, icon: <ControlPanelIcon /> },
  { label: 'Recycle Bin', level: 1, icon: <BinIcon /> },
  { label: 'Utilities', level: 1, icon: <FolderIcon /> },
];

const pinned = [
  { label: 'Command Prompt', icon: <PromptIcon /> },
  { label: 'Google Chrome', icon: <ChromeIcon /> },
  { label: 'Mozilla Firefox', icon: <FirefoxIcon id="fox-taskbar" />, hover: true },
  { label: 'Notepad', icon: <NotepadIcon /> },
  { label: 'Notepad++', icon: <NotepadPlusIcon id="npp-taskbar" /> },
  { label: 'Snipping Tool', icon: <SnippingIcon /> },
];

const PinButton = () => (
  <BigButton $width={78}>
    <PinIcon />
    {'Pin to Quick\naccess'}
  </BigButton>
);

const RibbonPanel = () => (
  <Ribbon>
    <Group $width={263}>
      <GroupBody>
        <PinButton />
        <BigButton $width={31} $muted>
          <CopyIcon />
          Copy
        </BigButton>
        <BigButton $width={51} $muted>
          <PasteIcon />
          Paste
        </BigButton>
        <Stack>
          <SmallButton $muted>
            <CutIcon />
            Cut
          </SmallButton>
          <SmallButton $muted>
            <CopyPathIcon />
            Copy path
          </SmallButton>
          <SmallButton $muted>
            <PasteShortcutIcon />
            Paste shortcut
          </SmallButton>
        </Stack>
      </GroupBody>
      <GroupLabel>Clipboard</GroupLabel>
    </Group>
    <Group $width={165}>
      <GroupBody $indent={7}>
        <Stack $loose $width={78}>
          <SmallButton $loose $muted>
            <MoveToIcon />
            Move to
            <Caret color="#a7abb0" />
          </SmallButton>
          <SmallButton $loose $muted>
            <CopyToIcon />
            Copy to
            <Caret color="#a7abb0" />
          </SmallButton>
        </Stack>
        <StackDivider />
        <Stack $loose>
          <SmallButton $loose $muted>
            <DeleteIcon />
            Delete
            <Caret />
          </SmallButton>
          <SmallButton $loose $muted>
            <RenameIcon />
            Rename
          </SmallButton>
        </Stack>
      </GroupBody>
      <GroupLabel>Organize</GroupLabel>
    </Group>
    <Group $width={83}>
      <GroupBody>
        <BigButton $width={49}>
          <NewFolderIcon />
          {'New\nfolder'}
        </BigButton>
        <Stack>
          <SmallButton aria-label="New item">
            <NewItemIcon />
            <Caret />
          </SmallButton>
          <SmallButton aria-label="Easy access">
            <EasyAccessIcon />
            <Caret />
          </SmallButton>
        </Stack>
      </GroupBody>
      <GroupLabel>New</GroupLabel>
    </Group>
    <Group $width={133}>
      <GroupBody>
        <BigButton $width={64}>
          <CheckSheetIcon size={32} />
          Properties
          <Caret />
        </BigButton>
        <Stack>
          <SmallButton $muted>
            <OpenIcon />
            Open
            <Caret color="#a7abb0" />
          </SmallButton>
          <SmallButton $muted>
            <EditIcon />
            Edit
          </SmallButton>
          <SmallButton>
            <HistoryIcon />
            History
          </SmallButton>
        </Stack>
      </GroupBody>
      <GroupLabel>Open</GroupLabel>
    </Group>
    <Group $width={115}>
      <GroupBody $indent={7}>
        <Stack>
          <SmallButton>
            <SelectIcon kind="all" />
            Select all
          </SmallButton>
          <SmallButton>
            <SelectIcon kind="none" />
            Select none
          </SmallButton>
          <SmallButton>
            <SelectIcon kind="invert" />
            Invert selection
          </SmallButton>
        </Stack>
      </GroupBody>
      <GroupLabel>Select</GroupLabel>
    </Group>
  </Ribbon>
);

const WindowTitle = ({ active }) => (
  <TitleBar $active={active}>
    <DocumentIcon />
    <TitleDivider $active={active} />
    <QuickAccess>
      <CheckSheetIcon faded={!active} />
      <FolderIcon />
      <UndoIcon color={active ? '#6f9bcc' : '#9fabb9'} />
      <UndoIcon flip color={active ? '#6f9bcc' : '#9fabb9'} />
      <CustomizeIcon color={active ? '#0b2c55' : '#111'} />
    </QuickAccess>
    <TitleDivider $active={active} />
    <Title>Documents</Title>
    <CaptionButton aria-label="Minimize">
      <Svg size={10} box={10}>
        <path d="M0 5.500h10" stroke="currentColor" />
      </Svg>
    </CaptionButton>
    <CaptionButton aria-label="Maximize">
      <Svg size={10} box={10}>
        <path d="M.5.500h9v9h-9z" stroke="currentColor" />
      </Svg>
    </CaptionButton>
    <CaptionButton aria-label="Close">
      <Svg size={10} box={10}>
        <path d="m0 0 10 10M10 0 0 10" stroke="currentColor" strokeWidth="1.200" />
      </Svg>
    </CaptionButton>
  </TitleBar>
);

const ExplorerWindow = ({ inset }) => (
  <WindowFrame $active $inset={inset}>
    <WindowTitle active />
    <TabBar>
      <Tab $width={56} $file>File</Tab>
      <Tab $width={58} $current>Home</Tab>
      <Tab $width={59}>Share</Tab>
      <Tab $width={53}>View</Tab>
      <TabTools>
        <Chevron direction="up" color="#8c8c8c" weight={1.2} />
        <HelpButton aria-label="Help">?</HelpButton>
      </TabTools>
    </TabBar>
    <RibbonPanel />
    <AddressRow>
      <Navigation>
        <Arrow color="#d8d8d8" />
        <Arrow rotate={180} color="#d8d8d8" />
        <Caret color="#d8d8d8" />
        <Arrow rotate={90} color="#6b6b6b" weight={1.8} />
      </Navigation>
      <AddressBox>
        <Crumbs>
          <DocumentIcon />
          <Chevron />
          <a href="#this-pc">This PC</a>
          <Chevron />
          <a href="#documents">Documents</a>
        </Crumbs>
        <AddressButton aria-label="Previous locations">
          <Chevron direction="down" size={10} color="#777" />
        </AddressButton>
        <AddressButton $divided aria-label="Refresh">
          <RefreshIcon />
        </AddressButton>
      </AddressBox>
      <SearchBox>
        <SearchInput type="text" aria-label="Search Documents" />
        <SearchIcon />
      </SearchBox>
    </AddressRow>
    <Body>
      <Tree>
        {tree.map(({ label, level, icon, selected }) => (
          <li key={`${level}-${label}`}>
            <TreeItem href="#folder" $level={level} $selected={selected}>
              {icon}
              {label}
            </TreeItem>
          </li>
        ))}
      </Tree>
      <Content>This folder is empty.</Content>
    </Body>
    <StatusBar>
      0 items
      <ViewSwitch>
        <DetailsViewIcon />
        <PictureIcon />
      </ViewSwitch>
    </StatusBar>
  </WindowFrame>
);

// Only the parts along the left edge are rendered, the rest stays covered.
const BackgroundWindow = ({ inset }) => (
  <WindowFrame $inset={inset}>
    <WindowTitle />
    <TabBar>
      <Tab $width={56} $file>File</Tab>
    </TabBar>
    <Ribbon>
      <GroupBody>
        <PinButton />
      </GroupBody>
    </Ribbon>
    <AddressRow>
      <Arrow color="#d8d8d8" />
    </AddressRow>
    <Body>
      <Tree>
        {tree.map(({ label, level, icon, selected }) => (
          <li key={`${level}-${label}`}>
            <TreeItem href="#folder" aria-label={label} $level={level} $selected={selected}>
              {icon}
            </TreeItem>
          </li>
        ))}
      </Tree>
    </Body>
    <StatusBar>0 items</StatusBar>
  </WindowFrame>
);

const App = () => (
  <ThemeProvider theme={theme}>
    <GlobalStyle />
    <Screen>
      <Desktop>
        <ShortcutGrid>
          {shortcuts.map(({ label, icon }) => (
            <li key={label}>
              <Shortcut href="#open">
                {icon}
                {label}
              </Shortcut>
            </li>
          ))}
        </ShortcutGrid>
        <BackgroundWindow inset={[75, 110, 62, 130]} />
        <ExplorerWindow inset={[100, 83, 35, 155]} />
      </Desktop>
      <TaskBar>
        <StartButton aria-label="Start">
          <WindowsIcon />
        </StartButton>
        <Pinned>
          {pinned.map(({ label, icon, hover }) => (
            <PinnedButton key={label} aria-label={label} $hover={hover}>
              {icon}
              {hover && (
                <Cursor width="12" height="19" viewBox="0 0 12 19" aria-hidden="true">
                  <path d="M.5.500v15l3.500-3.500 2.500 6 2.500-1-2.500-5.500h5z" fill="#fff" stroke="#000" strokeWidth=".8" />
                </Cursor>
              )}
            </PinnedButton>
          ))}
        </Pinned>
        <TaskButton>
          <LargeDocumentIcon />
          Documents
        </TaskButton>
        <TaskButton $active>
          <LargeDocumentIcon />
          Documents
        </TaskButton>
        <Tray>
          <NetworkIcon />
          <DisplayIcon />
          <VolumeIcon />
          <Clock dateTime="2023-10-04T11:42">
            11:42 AM
            <br />
            10/4/2023
          </Clock>
          <ShowDesktop aria-label="Show desktop" />
        </Tray>
      </TaskBar>
    </Screen>
  </ThemeProvider>
);

export default App;
